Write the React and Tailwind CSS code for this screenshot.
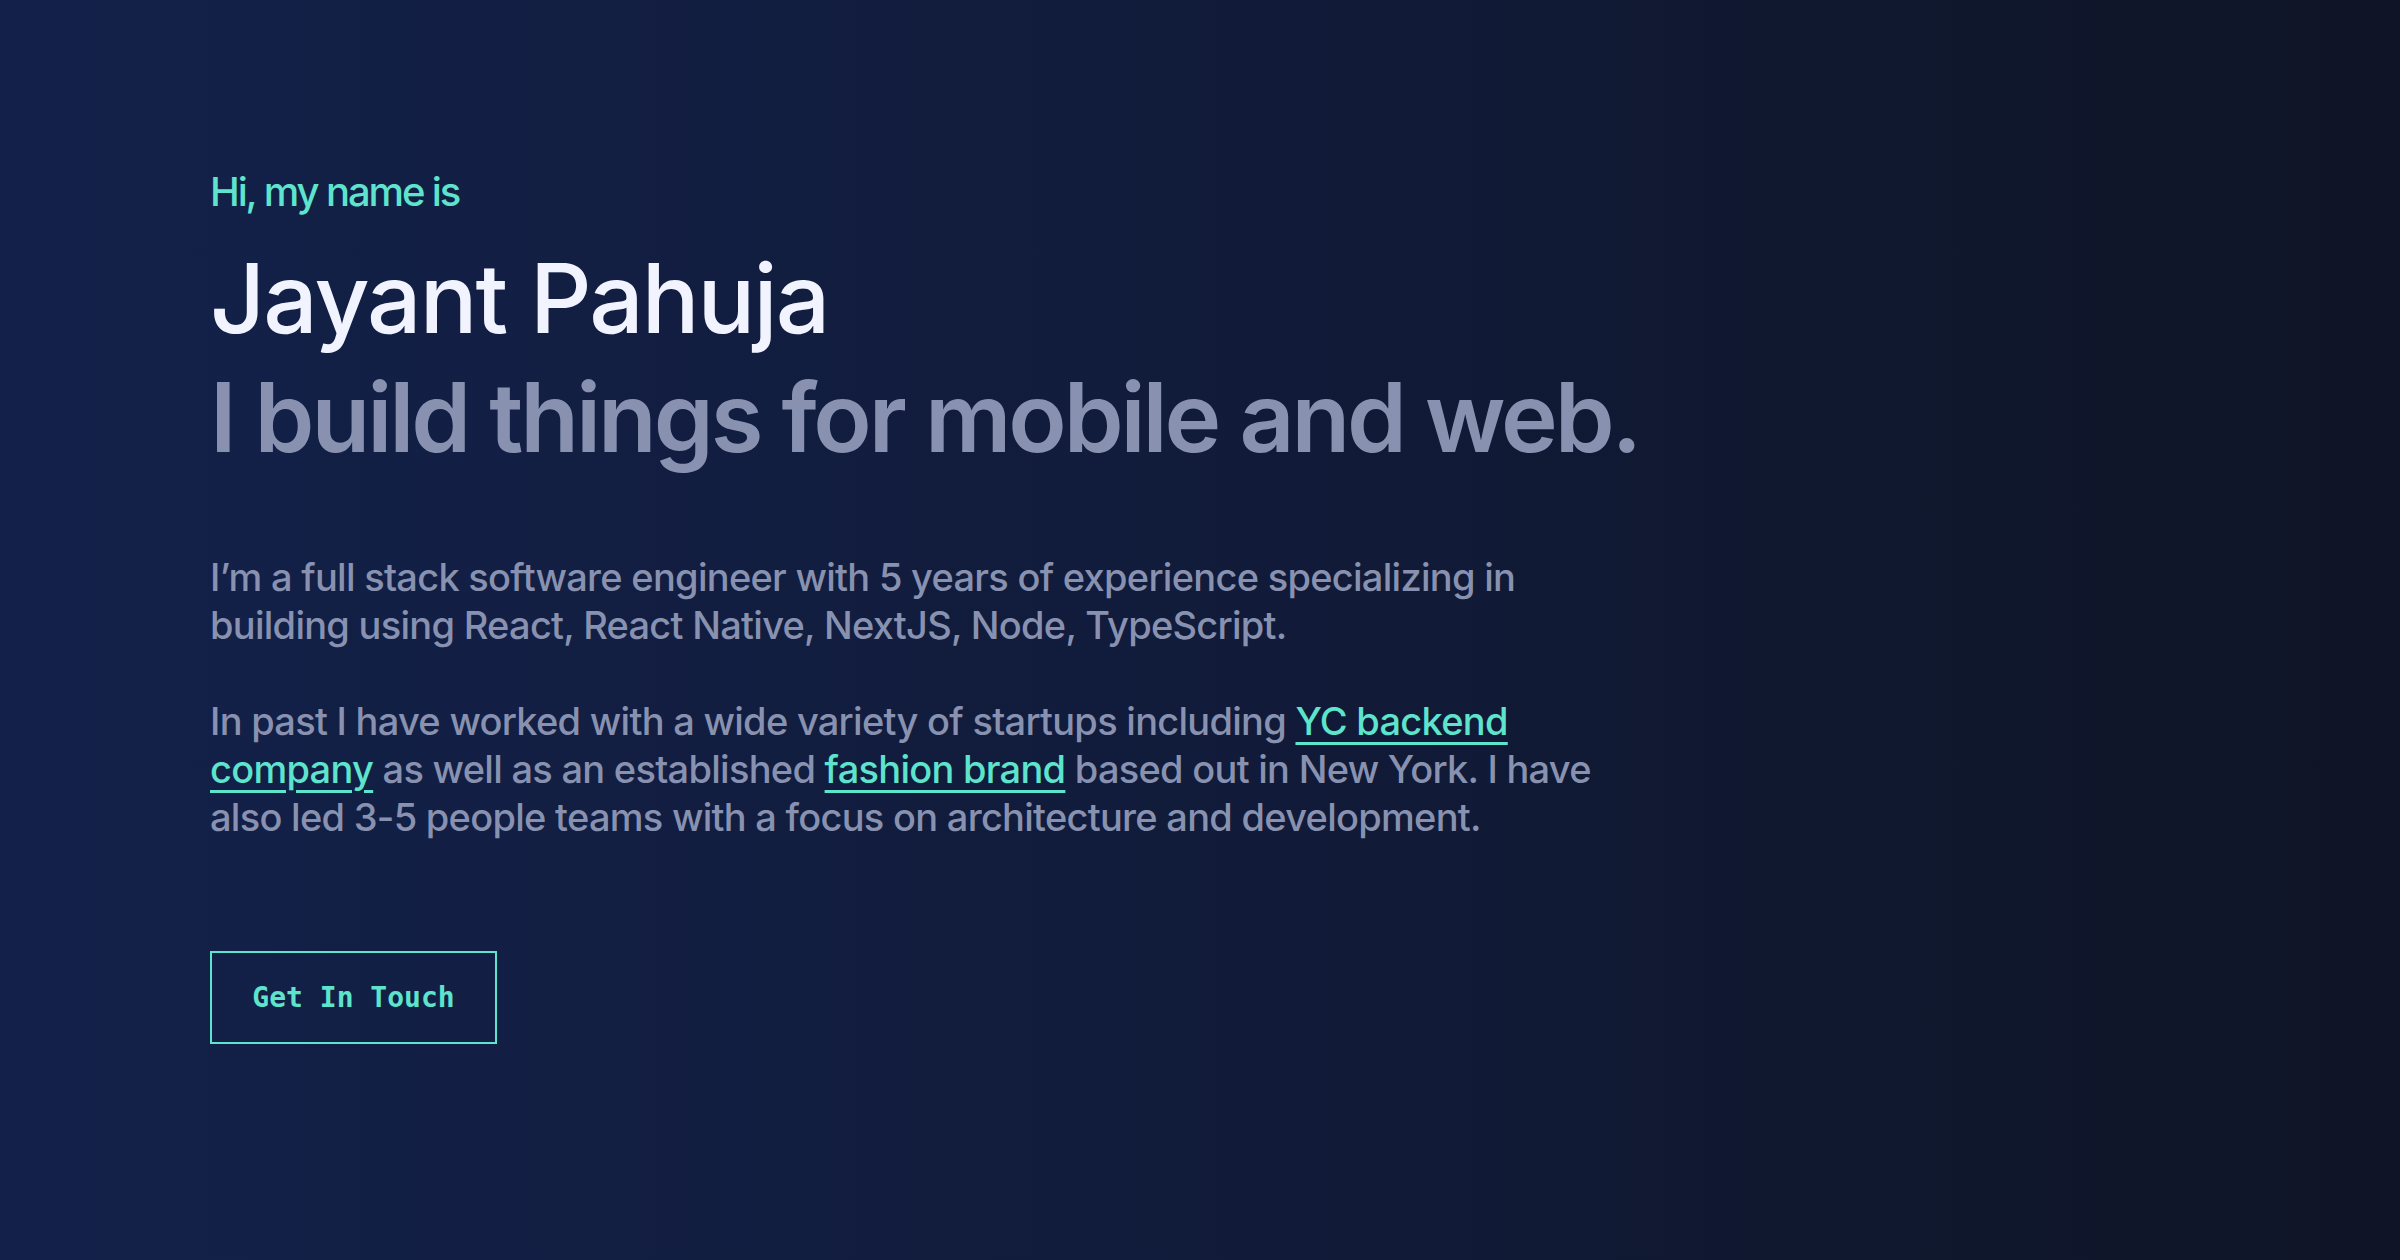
import React from 'react';

const teal = 'text-[#5ee4cc]';

function Link({ children }) {
  return (
    <a href="#" className={`${teal} underline decoration-[3px] underline-offset-[7px]`}>
      {children}
    </a>
  );
}

export default function App() {
  return (
    <div className="min-h-[1260px] w-full bg-linear-to-r from-[#13214a] via-[#111b3a] to-[#0f1526] font-['Inter',sans-serif] antialiased">
      <section className="flex flex-col items-start pl-[210px] pt-[168px]">
        {/* intro */}
        <p className={`${teal} text-[40px] leading-[48px] font-medium tracking-[-0.053em]`}>Hi, my name is</p>
        <h1 className="mt-[34px] text-[96px] leading-[96px] font-medium tracking-[-0.02em] text-[#f1f4ff]">Jayant Pahuja</h1>
        <h2 className="mt-[23px] text-[96px] leading-[96px] font-semibold tracking-[-0.032em] text-[#8892b0]">
          I build things for mobile and web.
        </h2>

        {/* about */}
        <div className="mt-[88px] text-[38px] leading-[48px] font-medium tracking-[-0.019em] text-[#8892b0]">
          <p>
            I’m a full stack software engineer with 5 years of experience specializing in
            <br />
            building using React, React Native, NextJS, Node, TypeScript.
          </p>
          <p className="mt-[48px]">
            In past I have worked with a wide variety of startups including <Link>YC backend</Link>
            <br />
            <Link>company</Link> as well as an established <Link>fashion brand</Link> based out in New York. I have
            <br />
            also led 3-5 people teams with a focus on architecture and development.
          </p>
        </div>

        {/* cta */}
        <button className={`mt-[110px] w-[287px] h-[93px] border-2 border-[#5ee4cc] ${teal} font-['DejaVu_Sans_Mono',monospace] font-semibold text-[28px]`}>
          Get In Touch
        </button>
      </section>
    </div>
  );
}
